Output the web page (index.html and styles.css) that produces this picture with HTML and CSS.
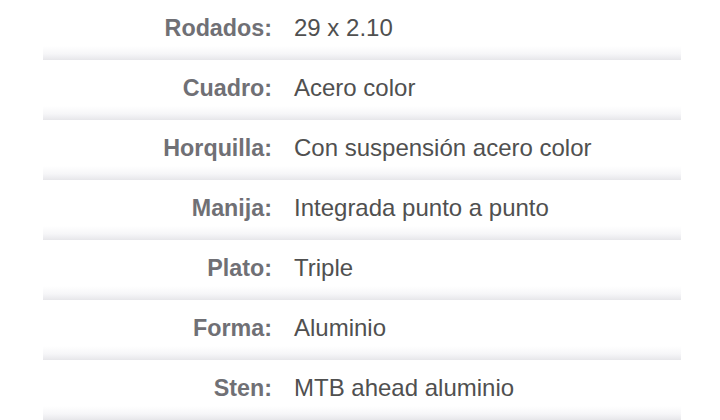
FILE: index.html
```html
<!DOCTYPE html>
<html lang="es">
<head>
<meta charset="utf-8">
<link rel="stylesheet" href="styles.css">
</head>
<body>
<div class="specs">
  <div class="row"><div class="label">Rodados:</div><div class="value">29 x 2.10</div></div>
  <div class="row"><div class="label">Cuadro:</div><div class="value">Acero color</div></div>
  <div class="row"><div class="label">Horquilla:</div><div class="value">Con suspensión acero color</div></div>
  <div class="row"><div class="label">Manija:</div><div class="value">Integrada punto a punto</div></div>
  <div class="row"><div class="label">Plato:</div><div class="value">Triple</div></div>
  <div class="row"><div class="label">Forma:</div><div class="value">Aluminio</div></div>
  <div class="row"><div class="label">Sten:</div><div class="value">MTB ahead aluminio</div></div>
</div>
</body>
</html>
```
FILE: styles.css
```css
html, body {
  margin: 0;
  padding: 0;
  background: #ffffff;
}
body {
  font-family: "Liberation Sans", Arial, sans-serif;
  overflow: hidden;
}
.specs {
  margin-left: 43px;
  width: 638px;
}
.row {
  display: flex;
  align-items: center;
  height: 60px;
  box-sizing: border-box;
  padding-bottom: 4px;
  background: linear-gradient(to bottom, #ffffff 0, #ffffff 46px, #f6f6f8 54px, #ececef 58px, #e6e6ea 60px);
}
.label {
  width: 229px;
  flex: none;
  text-align: right;
  font-weight: bold;
  font-size: 23.3px;
  color: #707075;
}
.value {
  padding-left: 22px;
  font-size: 24px;
  color: #505050;
}
```
